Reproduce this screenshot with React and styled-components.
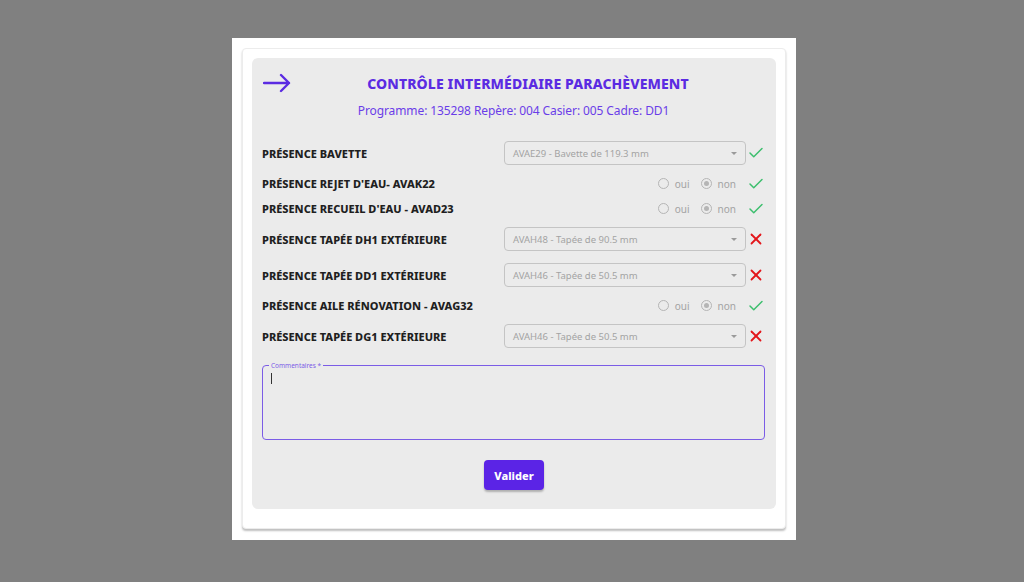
import React from 'react'
import styled, { createGlobalStyle } from 'styled-components'
import { Check, X } from 'lucide-react'

const GlobalStyle = createGlobalStyle`
  html, body {
    margin: 0;
    padding: 0;
    background: #808080;
    font-family: 'Noto Sans', 'Open Sans', sans-serif;
  }
`

const rows = [
  { label: 'Présence bavette', kind: 'select', value: 'AVAE29 - Bavette de 119.3 mm', ok: true },
  { label: "Présence rejet d'eau- AVAK22", kind: 'radio', ok: true },
  { label: "Présence recueil d'eau - AVAD23", kind: 'radio', ok: true },
  { label: 'Présence tapée DH1 extérieure', kind: 'select', value: 'AVAH48 - Tapée de 90.5 mm', ok: false },
  { label: 'Présence tapée DD1 extérieure', kind: 'select', value: 'AVAH46 - Tapée de 50.5 mm', ok: false },
  { label: 'Présence aile rénovation - AVAG32', kind: 'radio', ok: true },
  { label: 'Présence tapée DG1 extérieure', kind: 'select', value: 'AVAH46 - Tapée de 50.5 mm', ok: false }
]

const BackArrow = () => (
  <svg width="28" height="20" viewBox="0 0 28 20" fill="none">
    <path d="M1 10 H26 M18 2 L26 10 L18 18" stroke="#5b2be2" strokeWidth="2.4" strokeLinecap="round" strokeLinejoin="round" />
  </svg>
)

const App = () => {
  return (
    <Page>
      <GlobalStyle />
      <Dialog>
        <Card>
          <Panel>
            <Header>
              <BackArrow />
              <Title>Contrôle intermédiaire parachèvement</Title>
            </Header>
            <Subtitle>Programme: 135298 Repère: 004 Casier: 005 Cadre: DD1</Subtitle>
            <List>
              {rows.map((row, i) => (
                <Row key={i} $tall={row.kind === 'select'}>
                  <Label>{row.label}</Label>
                  {row.kind === 'select' ? (
                    <Select>
                      <span>{row.value}</span>
                      <Caret />
                    </Select>
                  ) : (
                    <RadioGroup>
                      <RadioItem><Radio /> oui</RadioItem>
                      <RadioItem><Radio $checked /> non</RadioItem>
                    </RadioGroup>
                  )}
                  <Status>
                    {row.ok
                      ? <Check size={18} strokeWidth={2} color="#3dbf6e" />
                      : <X size={18} strokeWidth={2.4} color="#e3161b" />}
                  </Status>
                </Row>
              ))}
            </List>
            <Field>
              <Legend>Commentaires *</Legend>
              <TextCursor />
            </Field>
            <ButtonRow>
              <Button>Valider</Button>
            </ButtonRow>
          </Panel>
        </Card>
      </Dialog>
    </Page>
  )
}

const Page = styled.div`
  display: flex;
  justify-content: center;
  padding: 38px 0 0 4px;
  height: 544px;
`

const Dialog = styled.div`
  background: #fff;
  width: 564px;
  height: 502px;
  padding: 10px;
  box-sizing: border-box;
`

const Card = styled.div`
  background: #fff;
  border-radius: 4px;
  border: 1px solid #ececec;
  box-shadow: 0 2px 2px rgba(0, 0, 0, 0.25);
  padding: 9px;
  height: 481px;
  box-sizing: border-box;
`

const Panel = styled.div`
  background: #ebebeb;
  border-radius: 6px;
  height: 451px;
  box-sizing: border-box;
  padding: 12px 11px 0 10px;
  display: flex;
  flex-direction: column;
`

const Header = styled.div`
  display: flex;
  align-items: center;
  padding-left: 1px;
  height: 26px;
`

const Title = styled.h1`
  flex: 1;
  margin: 0;
  text-align: center;
  text-transform: uppercase;
  color: #5b2be2;
  font-size: 14px;
  font-weight: 800;
  letter-spacing: 0.1px;
`

const Subtitle = styled.div`
  text-align: center;
  color: #6a3de8;
  font-size: 12px;
  margin-top: 6px;
  letter-spacing: -0.1px;
`

const List = styled.div`
  display: flex;
  flex-direction: column;
  margin-top: 16px;
`

const Row = styled.div`
  display: flex;
  align-items: center;
  height: ${p => (p.$tall ? '36px' : '25px')};
`

const Label = styled.div`
  flex: 1;
  text-transform: uppercase;
  font-size: 11px;
  font-weight: 800;
  color: #1f1f1f;
`

const Select = styled.div`
  width: 242px;
  height: 24px;
  box-sizing: border-box;
  border: 1px solid #c4c4c4;
  border-radius: 4px;
  display: flex;
  align-items: center;
  justify-content: space-between;
  padding: 0 8px 0 8px;
  font-size: 9.5px;
  color: #a3a3a3;
`

const Caret = styled.span`
  width: 0;
  height: 0;
  border-left: 3px solid transparent;
  border-right: 3px solid transparent;
  border-top: 3px solid #9a9a9a;
`

const RadioGroup = styled.div`
  display: flex;
  align-items: center;
  gap: 11px;
  padding-right: 10px;
`

const RadioItem = styled.label`
  display: flex;
  align-items: center;
  gap: 6px;
  font-size: 10px;
  color: #a3a3a3;
`

const Radio = styled.span`
  width: 11px;
  height: 11px;
  box-sizing: border-box;
  border-radius: 50%;
  border: 1px solid #b5b5b5;
  display: flex;
  align-items: center;
  justify-content: center;
  &::after {
    content: '';
    display: ${p => (p.$checked ? 'block' : 'none')};
    width: 5px;
    height: 5px;
    border-radius: 50%;
    background: #b5b5b5;
  }
`

const Status = styled.div`
  width: 19px;
  display: flex;
  justify-content: flex-end;
  align-items: center;
`

const Field = styled.fieldset`
  margin: 7px 0 0 0;
  padding: 0 8px;
  height: 79px;
  box-sizing: border-box;
  border: 1px solid #7b5ce6;
  border-radius: 4px;
`

const Legend = styled.legend`
  font-size: 6.5px;
  color: #7b5ce6;
  padding: 0 2px;
  margin-left: -2px;
`

const TextCursor = styled.span`
  display: block;
  width: 1px;
  height: 11px;
  background: #333;
  margin-top: 3px;
`

const ButtonRow = styled.div`
  display: flex;
  justify-content: center;
  margin-top: 20px;
`

const Button = styled.button`
  width: 60px;
  height: 30px;
  border: none;
  border-radius: 4px;
  background: #5b24e6;
  color: #fff;
  font-family: inherit;
  font-size: 11px;
  font-weight: 800;
  box-shadow: 0 2px 2px rgba(0, 0, 0, 0.25);
  margin-left: 1px;
`

export default App
